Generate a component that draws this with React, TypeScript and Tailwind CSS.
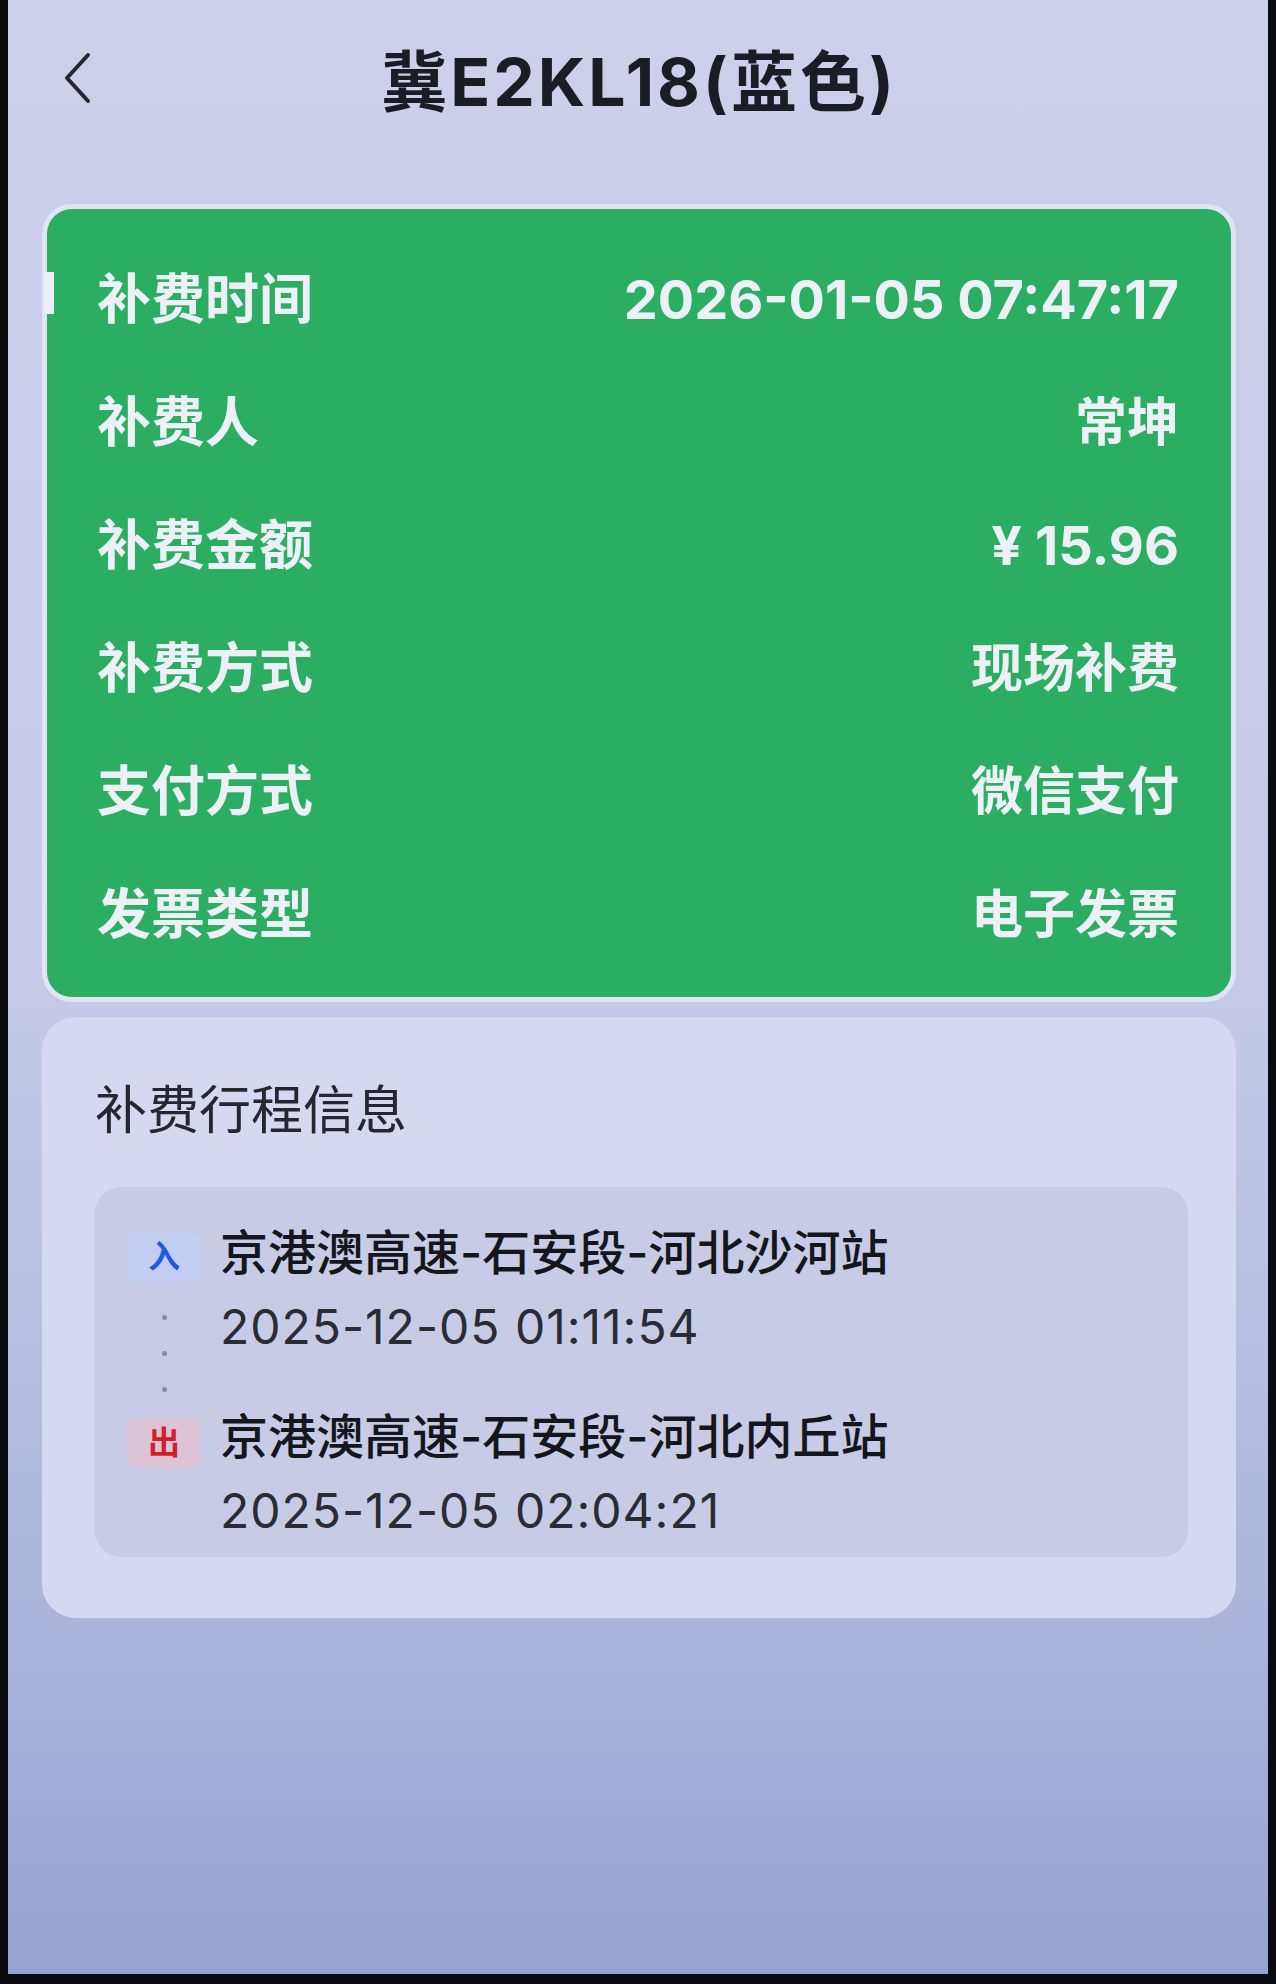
import React from "react";

const font = { fontFamily: 'Inter, "Noto Sans CJK SC", sans-serif' };

const rows: [string, string][] = [
  ["补费时间", "2026-01-05 07:47:17"],
  ["补费人", "常坤"],
  ["补费金额", "¥ 15.96"],
  ["补费方式", "现场补费"],
  ["支付方式", "微信支付"],
  ["发票类型", "电子发票"],
];

function Chevron() {
  return (
    <svg width="32" height="52" viewBox="0 0 32 52" fill="none">
      <path d="M27 3 L6 26 L27 49" stroke="#26272e" strokeWidth="4" strokeLinecap="round" strokeLinejoin="round" />
    </svg>
  );
}

export default function App() {
  return (
    <div className="w-[1276px] h-[1984px] bg-[#0a0b10]" style={font}>
      <div className="mx-[8px] h-[1974px] bg-[linear-gradient(180deg,#ccd0ea_0%,#c6cae8_50%,#aeb6dc_80%,#99a3d0_100%)] flex flex-col pl-[34px] pr-[32px]">
        {/* header */}
        <div className="h-[164px] grid grid-cols-[1fr_auto_1fr] items-center">
          <div className="pl-[19px] flex items-center mt-[-8px]">
            <Chevron />
          </div>
          <div className="text-[66px] font-bold text-[#1c1d24] leading-none tracking-[3px]">冀E2KL18(蓝色)</div>
          <div />
        </div>

        {/* green card */}
        <div className="mt-[40px] relative rounded-[30px] border-[5px] border-[#e1e4f4] bg-[#2cae62] pl-[50px] pr-[52px] pt-[29px] pb-[21px]">
          <div className="absolute left-[-3px] top-[63px] w-[10px] h-[42px] bg-[#eceef8]" />
          {rows.map(([k, v]) => (
            <div key={k} className="h-[123px] flex items-center justify-between text-[#eef0f8] font-bold">
              <span className="text-[54px] leading-none">{k}</span>
              <span className={v.match(/\d/) ? "text-[54px] leading-none" : "text-[52px] leading-none"}>{v}</span>
            </div>
          ))}
        </div>

        {/* trip card */}
        <div className="mt-[15px] rounded-[34px] bg-[#d5d8f0] pl-[53px] pr-[48px] pt-[64px] pb-[61px]">
          <div className="text-[52px] leading-[60px] text-[#25262e]">补费行程信息</div>
          <div className="mt-[46px] rounded-[26px] bg-[#c7cbe6] pl-[32px] pr-[32px] pt-[36px] pb-[18px]">
            <div className="flex items-center h-[60px]">
              <div className="w-[74px] h-[50px] rounded-[10px] bg-[#c1cdf1] flex items-center justify-center text-[32px] font-bold text-[#2356df] mt-[8px]">入</div>
              <div className="ml-[19px] text-[48px] leading-[60px] font-medium text-[#15161c]">京港澳高速-石安段-河北沙河站</div>
            </div>
            <div className="flex mt-[16px] h-[108px]">
              <div className="w-[74px] flex flex-col items-center pt-[16px] gap-[31px]">
                <div className="w-[5px] h-[5px] rounded-full bg-[#868ba3]" />
                <div className="w-[5px] h-[5px] rounded-full bg-[#868ba3]" />
                <div className="w-[5px] h-[5px] rounded-full bg-[#868ba3]" />
              </div>
              <div className="ml-[19px] text-[48px] leading-[56px] tracking-[1px] text-[#2a2b33]">2025-12-05 01:11:54</div>
            </div>
            <div className="flex items-center h-[60px]">
              <div className="w-[74px] h-[50px] rounded-[10px] bg-[#dcc4d6] flex items-center justify-center text-[32px] font-bold text-[#d21f2b] mt-[12px]">出</div>
              <div className="ml-[19px] text-[48px] leading-[60px] font-medium text-[#15161c]">京港澳高速-石安段-河北内丘站</div>
            </div>
            <div className="flex mt-[16px]">
              <div className="w-[74px]" />
              <div className="ml-[19px] text-[48px] leading-[56px] tracking-[1px] text-[#2a2b33]">2025-12-05 02:04:21</div>
            </div>
          </div>
        </div>
      </div>
    </div>
  );
}
